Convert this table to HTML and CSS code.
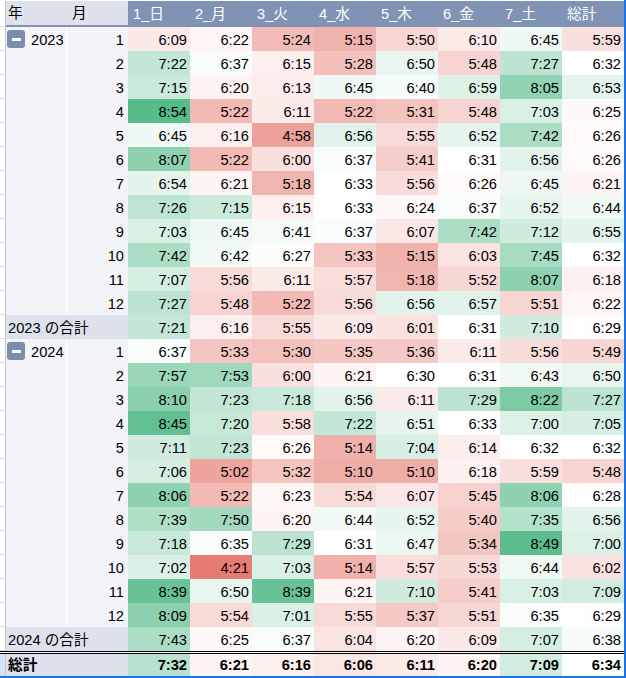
FILE: index.html
```html
<!DOCTYPE html>
<html lang="ja">
<head>
<meta charset="utf-8">
<title>ピボットテーブル</title>
<link rel="stylesheet" href="styles.css">
</head>
<body>
<div class="sheet">
  <div class="row head"><div class="cell strip"></div><div class="cell hl hy">年</div><div class="cell hl hm">月</div><div class="cell hd">1_日</div><div class="cell hd">2_月</div><div class="cell hd">3_火</div><div class="cell hd">4_水</div><div class="cell hd">5_木</div><div class="cell hd">6_金</div><div class="cell hd">7_土</div><div class="cell hd">総計</div></div>

  <div class="row"><div class="cell strip"></div><div class="cell yr"><span class="toggle"></span>2023</div><div class="cell mo">1</div><div class="cell v">6:09</div><div class="cell v">6:22</div><div class="cell v">5:24</div><div class="cell v">5:15</div><div class="cell v">5:50</div><div class="cell v">6:10</div><div class="cell v">6:45</div><div class="cell v">5:59</div></div>
  <div class="row"><div class="cell strip"></div><div class="cell yr"></div><div class="cell mo">2</div><div class="cell v">7:22</div><div class="cell v">6:37</div><div class="cell v">6:15</div><div class="cell v">5:28</div><div class="cell v">6:50</div><div class="cell v">5:48</div><div class="cell v">7:27</div><div class="cell v">6:32</div></div>
  <div class="row"><div class="cell strip"></div><div class="cell yr"></div><div class="cell mo">3</div><div class="cell v">7:15</div><div class="cell v">6:20</div><div class="cell v">6:13</div><div class="cell v">6:45</div><div class="cell v">6:40</div><div class="cell v">6:59</div><div class="cell v">8:05</div><div class="cell v">6:53</div></div>
  <div class="row"><div class="cell strip"></div><div class="cell yr"></div><div class="cell mo">4</div><div class="cell v">8:54</div><div class="cell v">5:22</div><div class="cell v">6:11</div><div class="cell v">5:22</div><div class="cell v">5:31</div><div class="cell v">5:48</div><div class="cell v">7:03</div><div class="cell v">6:25</div></div>
  <div class="row"><div class="cell strip"></div><div class="cell yr"></div><div class="cell mo">5</div><div class="cell v">6:45</div><div class="cell v">6:16</div><div class="cell v">4:58</div><div class="cell v">6:56</div><div class="cell v">5:55</div><div class="cell v">6:52</div><div class="cell v">7:42</div><div class="cell v">6:26</div></div>
  <div class="row"><div class="cell strip"></div><div class="cell yr"></div><div class="cell mo">6</div><div class="cell v">8:07</div><div class="cell v">5:22</div><div class="cell v">6:00</div><div class="cell v">6:37</div><div class="cell v">5:41</div><div class="cell v">6:31</div><div class="cell v">6:56</div><div class="cell v">6:26</div></div>
  <div class="row"><div class="cell strip"></div><div class="cell yr"></div><div class="cell mo">7</div><div class="cell v">6:54</div><div class="cell v">6:21</div><div class="cell v">5:18</div><div class="cell v">6:33</div><div class="cell v">5:56</div><div class="cell v">6:26</div><div class="cell v">6:45</div><div class="cell v">6:21</div></div>
  <div class="row"><div class="cell strip"></div><div class="cell yr"></div><div class="cell mo">8</div><div class="cell v">7:26</div><div class="cell v">7:15</div><div class="cell v">6:15</div><div class="cell v">6:33</div><div class="cell v">6:24</div><div class="cell v">6:37</div><div class="cell v">6:52</div><div class="cell v">6:44</div></div>
  <div class="row"><div class="cell strip"></div><div class="cell yr"></div><div class="cell mo">9</div><div class="cell v">7:03</div><div class="cell v">6:45</div><div class="cell v">6:41</div><div class="cell v">6:37</div><div class="cell v">6:07</div><div class="cell v">7:42</div><div class="cell v">7:12</div><div class="cell v">6:55</div></div>
  <div class="row"><div class="cell strip"></div><div class="cell yr"></div><div class="cell mo">10</div><div class="cell v">7:42</div><div class="cell v">6:42</div><div class="cell v">6:27</div><div class="cell v">5:33</div><div class="cell v">5:15</div><div class="cell v">6:03</div><div class="cell v">7:45</div><div class="cell v">6:32</div></div>
  <div class="row"><div class="cell strip"></div><div class="cell yr"></div><div class="cell mo">11</div><div class="cell v">7:07</div><div class="cell v">5:56</div><div class="cell v">6:11</div><div class="cell v">5:57</div><div class="cell v">5:18</div><div class="cell v">5:52</div><div class="cell v">8:07</div><div class="cell v">6:18</div></div>
  <div class="row"><div class="cell strip"></div><div class="cell yr"></div><div class="cell mo">12</div><div class="cell v">7:27</div><div class="cell v">5:48</div><div class="cell v">5:22</div><div class="cell v">5:56</div><div class="cell v">6:56</div><div class="cell v">6:57</div><div class="cell v">5:51</div><div class="cell v">6:22</div></div>
  <div class="row"><div class="cell strip"></div><div class="cell lab">2023 の合計</div><div class="cell v">7:21</div><div class="cell v">6:16</div><div class="cell v">5:55</div><div class="cell v">6:09</div><div class="cell v">6:01</div><div class="cell v">6:31</div><div class="cell v">7:10</div><div class="cell v">6:29</div></div>

  <div class="row"><div class="cell strip"></div><div class="cell yr"><span class="toggle"></span>2024</div><div class="cell mo">1</div><div class="cell v">6:37</div><div class="cell v">5:33</div><div class="cell v">5:30</div><div class="cell v">5:35</div><div class="cell v">5:36</div><div class="cell v">6:11</div><div class="cell v">5:56</div><div class="cell v">5:49</div></div>
  <div class="row"><div class="cell strip"></div><div class="cell yr"></div><div class="cell mo">2</div><div class="cell v">7:57</div><div class="cell v">7:53</div><div class="cell v">6:00</div><div class="cell v">6:21</div><div class="cell v">6:30</div><div class="cell v">6:31</div><div class="cell v">6:43</div><div class="cell v">6:50</div></div>
  <div class="row"><div class="cell strip"></div><div class="cell yr"></div><div class="cell mo">3</div><div class="cell v">8:10</div><div class="cell v">7:23</div><div class="cell v">7:18</div><div class="cell v">6:56</div><div class="cell v">6:11</div><div class="cell v">7:29</div><div class="cell v">8:22</div><div class="cell v">7:27</div></div>
  <div class="row"><div class="cell strip"></div><div class="cell yr"></div><div class="cell mo">4</div><div class="cell v">8:45</div><div class="cell v">7:20</div><div class="cell v">5:58</div><div class="cell v">7:22</div><div class="cell v">6:51</div><div class="cell v">6:33</div><div class="cell v">7:00</div><div class="cell v">7:05</div></div>
  <div class="row"><div class="cell strip"></div><div class="cell yr"></div><div class="cell mo">5</div><div class="cell v">7:11</div><div class="cell v">7:23</div><div class="cell v">6:26</div><div class="cell v">5:14</div><div class="cell v">7:04</div><div class="cell v">6:14</div><div class="cell v">6:32</div><div class="cell v">6:32</div></div>
  <div class="row"><div class="cell strip"></div><div class="cell yr"></div><div class="cell mo">6</div><div class="cell v">7:06</div><div class="cell v">5:02</div><div class="cell v">5:32</div><div class="cell v">5:10</div><div class="cell v">5:10</div><div class="cell v">6:18</div><div class="cell v">5:59</div><div class="cell v">5:48</div></div>
  <div class="row"><div class="cell strip"></div><div class="cell yr"></div><div class="cell mo">7</div><div class="cell v">8:06</div><div class="cell v">5:22</div><div class="cell v">6:23</div><div class="cell v">5:54</div><div class="cell v">6:07</div><div class="cell v">5:45</div><div class="cell v">8:06</div><div class="cell v">6:28</div></div>
  <div class="row"><div class="cell strip"></div><div class="cell yr"></div><div class="cell mo">8</div><div class="cell v">7:39</div><div class="cell v">7:50</div><div class="cell v">6:20</div><div class="cell v">6:44</div><div class="cell v">6:52</div><div class="cell v">5:40</div><div class="cell v">7:35</div><div class="cell v">6:56</div></div>
  <div class="row"><div class="cell strip"></div><div class="cell yr"></div><div class="cell mo">9</div><div class="cell v">7:18</div><div class="cell v">6:35</div><div class="cell v">7:29</div><div class="cell v">6:31</div><div class="cell v">6:47</div><div class="cell v">5:34</div><div class="cell v">8:49</div><div class="cell v">7:00</div></div>
  <div class="row"><div class="cell strip"></div><div class="cell yr"></div><div class="cell mo">10</div><div class="cell v">7:02</div><div class="cell v">4:21</div><div class="cell v">7:03</div><div class="cell v">5:14</div><div class="cell v">5:57</div><div class="cell v">5:53</div><div class="cell v">6:44</div><div class="cell v">6:02</div></div>
  <div class="row"><div class="cell strip"></div><div class="cell yr"></div><div class="cell mo">11</div><div class="cell v">8:39</div><div class="cell v">6:50</div><div class="cell v">8:39</div><div class="cell v">6:21</div><div class="cell v">7:10</div><div class="cell v">5:41</div><div class="cell v">7:03</div><div class="cell v">7:09</div></div>
  <div class="row"><div class="cell strip"></div><div class="cell yr"></div><div class="cell mo">12</div><div class="cell v">8:09</div><div class="cell v">5:54</div><div class="cell v">7:01</div><div class="cell v">5:55</div><div class="cell v">5:37</div><div class="cell v">5:51</div><div class="cell v">6:35</div><div class="cell v">6:29</div></div>
  <div class="row last-sub"><div class="cell strip"></div><div class="cell lab">2024 の合計</div><div class="cell v">7:43</div><div class="cell v">6:25</div><div class="cell v">6:37</div><div class="cell v">6:04</div><div class="cell v">6:20</div><div class="cell v">6:09</div><div class="cell v">7:07</div><div class="cell v">6:38</div></div>

  <div class="row total"><div class="cell strip"></div><div class="cell lab">総計</div><div class="cell v">7:32</div><div class="cell v">6:21</div><div class="cell v">6:16</div><div class="cell v">6:06</div><div class="cell v">6:11</div><div class="cell v">6:20</div><div class="cell v">7:09</div><div class="cell v">6:34</div></div>
</div>
<script src="script.js"></script>
</body>
</html>
```

FILE: styles.css
```css
* {
  box-sizing: border-box;
  margin: 0;
  padding: 0;
}

body {
  margin: 0;
  background: #ffffff;
  font-family: "Liberation Sans", "Noto Sans CJK JP", Arial, sans-serif;
  font-size: 14.67px;
  color: #000000;
}

.sheet {
  width: 626px;
  padding-top: 1px;
  border-right: 2px solid #1a73e8;
  border-bottom: 2px solid #1a73e8;
}

.row {
  display: grid;
  grid-template-columns: 6px 61px 61px repeat(8, 62px);
  height: 24px;
}

.cell {
  display: flex;
  align-items: flex-end;
  padding: 0 3px 2px;
  line-height: 17px;
  white-space: nowrap;
  overflow: hidden;
}

.strip {
  padding: 0;
  background: #ffffff;
  border-right: 1px solid #c4c7c5;
  border-bottom: 1px solid #dadce0;
}

/* header */
.head {
  height: 26px;
}

.head .cell {
  align-items: center;
  padding-bottom: 0;
}

.hl {
  background: #dee2ec;
  border-bottom: 2px solid #8193b4;
}

.hy {
  padding-left: 2px;
}

.hm {
  padding-left: 5px;
}

.hd {
  background: #8193b4;
  color: #ffffff;
  padding-left: 5px;
}

/* row headers */
.yr {
  background: #f3f4f7;
  border-right: 1px solid #ffffff;
  padding-left: 1px;
  gap: 6px;
}

.toggle {
  align-self: center;
  margin-top: 2px;
  width: 18px;
  height: 18px;
  flex: none;
  background: #7b8dad;
  border-radius: 3px;
  display: flex;
  align-items: center;
  justify-content: center;
}

.toggle::after {
  content: "";
  width: 9px;
  height: 3px;
  background: #ffffff;
}

.mo {
  background: #f3f4f7;
  justify-content: flex-end;
  padding-right: 4px;
}

.lab {
  grid-column: span 2;
  background: #dee2ec;
  padding-left: 2px;
}

.v {
  justify-content: flex-end;
}

.last-sub {
  height: 27px;
  border-bottom: 3px double #000000;
}

.total {
  height: 22px;
  font-weight: bold;
}

.total .strip {
  background: #d3e3fd;
}
```

FILE: script.js
```js
(function () {
  var cells = Array.prototype.slice.call(document.querySelectorAll('.v'));
  function toMin(t) {
    var p = t.trim().split(':');
    return parseInt(p[0], 10) * 60 + parseInt(p[1], 10);
  }
  var vals = cells.map(function (c) { return toMin(c.textContent); });
  var sorted = vals.slice().sort(function (a, b) { return a - b; });
  var n = sorted.length;
  var mid = n % 2 ? sorted[(n - 1) / 2] : (sorted[n / 2 - 1] + sorted[n / 2]) / 2;
  var min = sorted[0], max = sorted[n - 1];
  var low = [230, 124, 115], high = [87, 187, 138], white = [255, 255, 255];
  function mix(a, b, t) {
    return [0, 1, 2].map(function (i) { return Math.round(a[i] + (b[i] - a[i]) * t); });
  }
  cells.forEach(function (c, i) {
    var v = vals[i], col;
    if (v <= mid) {
      col = mix(white, low, (mid - v) / (mid - min));
    } else {
      col = mix(white, high, (v - mid) / (max - mid));
    }
    c.style.backgroundColor = 'rgb(' + col.join(',') + ')';
  });
})();
```
